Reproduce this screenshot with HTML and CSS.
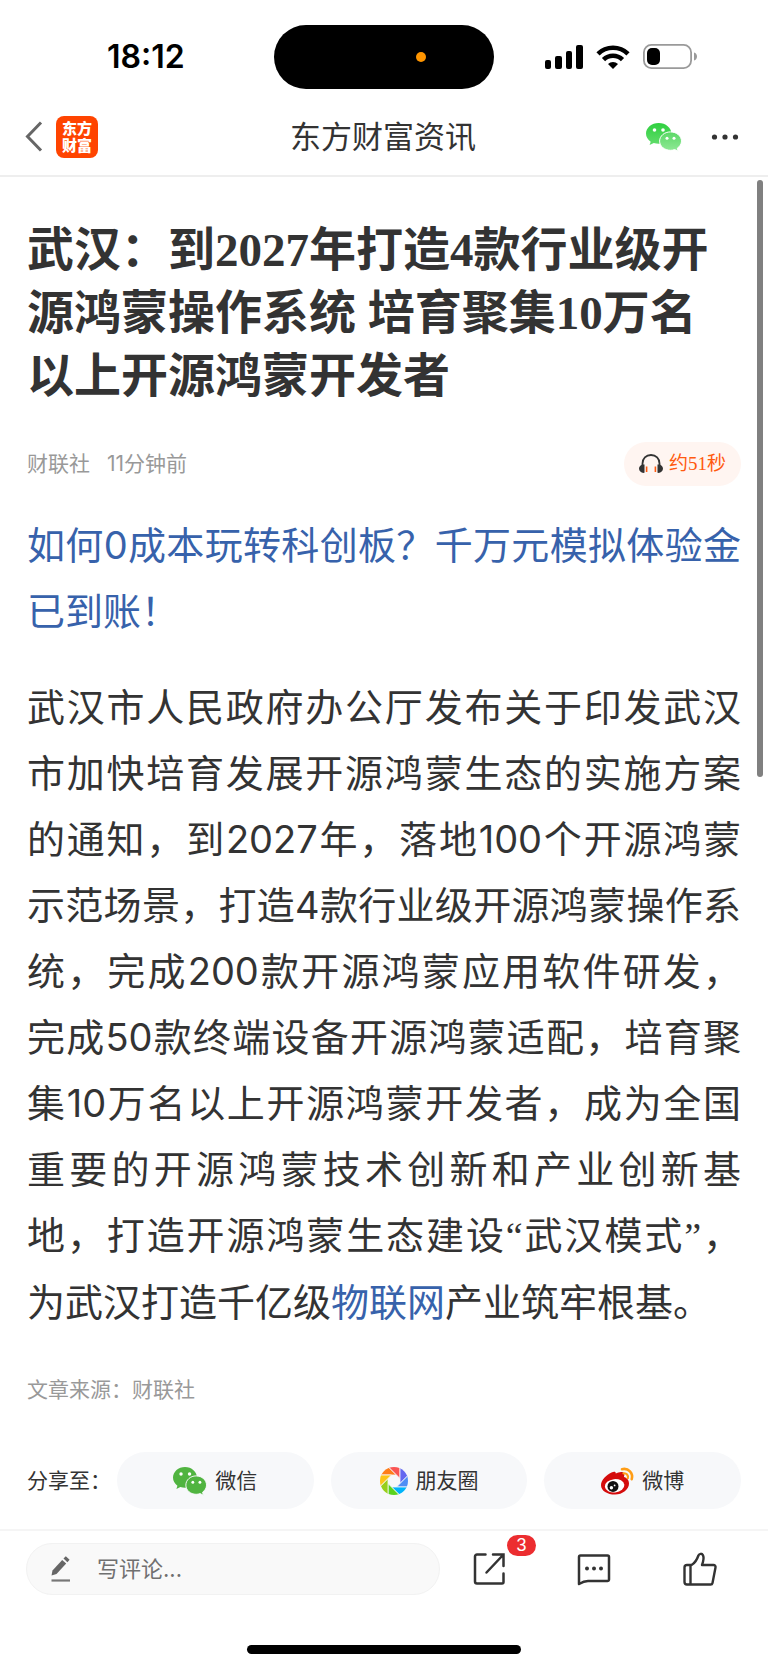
FILE: index.html
```html
<!DOCTYPE html>
<html lang="zh-CN">
<head>
<meta charset="utf-8">
<meta name="viewport" content="width=device-width, initial-scale=1">
<title>东方财富资讯</title>
<link rel="stylesheet" href="styles.css">
</head>
<body>
<div class="screen">
  <div class="status">
    <time class="clock">18:12</time>
    <div class="island"><span class="island-dot"></span></div>
    <div class="status-icons">
      <svg width="38" height="24" viewBox="0 0 38 24" aria-hidden="true"><rect x="0" y="15" width="6" height="9" rx="2"/><rect x="10" y="11" width="7" height="13" rx="2"/><rect x="21" y="6" width="6" height="18" rx="2"/><rect x="31" y="0" width="7" height="24" rx="2"/></svg>
      <svg width="34" height="24" viewBox="0 0 34 24" fill="none" stroke="#000" stroke-width="4.6" aria-hidden="true"><path d="M2 8.800a21.500 21.500 0 0 1 30 0M7.500 14.600a13.600 13.600 0 0 1 19 0"/><path d="M17 24l-5-5a7.200 7.200 0 0 1 10 0z" fill="#000" stroke="none"/></svg>
      <svg width="54" height="25" viewBox="0 0 54 25" aria-hidden="true"><rect x=".9" y=".9" width="47.200" height="23.200" rx="7.500" fill="none" stroke="#9a9a9a" stroke-width="1.800"/><rect x="4" y="4" width="13" height="17" rx="5"/><path d="M51 8.500c4 1 4 7 0 8z" fill="#9a9a9a"/></svg>
    </div>
  </div>

  <header class="nav">
    <div class="nav-side">
      <button class="icon-btn" aria-label="返回"><svg width="15" height="31" viewBox="2 0 15 31" fill="none" stroke="#666" stroke-width="3"><path d="M16 1.500L2.500 15.500l13.500 14"/></svg></button>
      <a class="logo" href="#"><span>东方</span><span>财富</span></a>
    </div>
    <h2 class="nav-title">东方财富资讯</h2>
    <div class="nav-side nav-actions">
      <button class="icon-btn" aria-label="微信分享"><svg width="36" height="28" viewBox="0 0 36 28">
        <defs><linearGradient id="g" x1="0" y1="0" x2="0" y2="1"><stop offset="0" stop-color="#2fd03f"/><stop offset="1" stop-color="#62dc6c"/></linearGradient><linearGradient id="h" x1="0" y1="0" x2="0" y2="1"><stop offset="0" stop-color="#5bd866"/><stop offset="1" stop-color="#90e996"/></linearGradient></defs>
        <path fill="url(#g)" d="M12.700 0C5.700 0 0 4.700 0 10.500c0 3.300 1.800 6.200 4.700 8.200L3.600 22l4.200-2.100c1.500.5 3.200.8 4.900.8 7 0 12.700-4.600 12.700-10.200S19.700 0 12.700 0z"/>
        <path fill="url(#h)" stroke="#fff" stroke-width="1" d="M24.500 8.900c-6.100 0-10.900 4.100-10.900 9.200s4.800 9.200 10.900 9.200c1.500 0 2.900-.2 4.200-.7l3.500 1.600-.9-3c2.600-1.700 4.200-4.200 4.200-7.100 0-5.100-4.900-9.200-11-9.200z"/>
        <g fill="#fff"><circle cx="8.500" cy="7" r="1.800"/><circle cx="17" cy="7" r="1.800"/><circle cx="21" cy="15.200" r="1.500"/><circle cx="28" cy="15.200" r="1.500"/></g></svg></button>
      <button class="icon-btn" aria-label="更多"><svg width="28" height="28" viewBox="0 0 28 28" fill="#333"><circle cx="3.500" cy="14" r="2.600"/><circle cx="14" cy="14" r="2.600"/><circle cx="24.500" cy="14" r="2.600"/></svg></button>
    </div>
  </header>

  <main class="article">
    <h1 class="title">武汉：到2027年打造4款行业级开源鸿蒙操作系统 培育聚集10万名以上开源鸿蒙开发者</h1>
    <div class="meta">
      <span>财联社</span><span>11分钟前</span>
      <button class="listen"><svg width="24" height="20" viewBox="0 0 24 20" fill="none" aria-hidden="true"><path d="M3.500 12V9.500C3.500 4.500 7 1 12 1s8.500 3.500 8.500 8.500V12" stroke="#333" stroke-width="1.800"/><path d="M5.500 10.500v8.300C2.500 19.300 0 17.500 0 14.600s2.500-4.600 5.500-4.100zM18.500 10.500v8.300c3 .5 5.500-1.300 5.500-4.200s-2.500-4.600-5.500-4.100z" fill="#333"/><path d="M7.600 12.500v5.500M16.400 12.500v5.500" stroke="#ff5a0f" stroke-width="1.600"/></svg>约51秒</button>
    </div>
    <p class="text"><a href="#">如何0成本玩转科创板？千万元模拟体验金已到账！</a></p>
    <p class="text">武汉市人民政府办公厅发布关于印发武汉市加快培育发展开源鸿蒙生态的实施方案的通知，到2027年，落地100个开源鸿蒙示范场景，打造4款行业级开源鸿蒙操作系统，完成200款开源鸿蒙应用软件研发，完成50款终端设备开源鸿蒙适配，培育聚集10万名以上开源鸿蒙开发者，成为全国重要的开源鸿蒙技术创新和产业创新基地，打造开源鸿蒙生态建设<span class="quote">“</span>武汉模式<span class="quote">”</span>，为武汉打造千亿级<a href="#">物联网</a>产业筑牢根基。</p>
    <p class="source">文章来源：财联社</p>
    <div class="share">
      <span class="share-label">分享至：</span>
      <button class="pill"><svg width="34" height="28" viewBox="0 0 36 28" preserveAspectRatio="none" aria-hidden="true">
        <g fill="#50b440"><path d="M12.700 0C5.700 0 0 4.700 0 10.500c0 3.300 1.800 6.200 4.700 8.200L3.600 22l4.200-2.100c1.500.5 3.200.8 4.900.8 7 0 12.700-4.600 12.700-10.200S19.700 0 12.700 0z"/>
        <path stroke="#f7f8fa" stroke-width="1" d="M24.500 8.900c-6.100 0-10.900 4.100-10.900 9.200s4.800 9.200 10.900 9.200c1.500 0 2.900-.2 4.200-.7l3.500 1.600-.9-3c2.600-1.700 4.200-4.200 4.200-7.100 0-5.100-4.900-9.200-11-9.200z"/></g>
        <g fill="#fff"><circle cx="8.500" cy="7" r="1.800"/><circle cx="17.500" cy="7" r="1.800"/><circle cx="21" cy="15.200" r="1.500"/><circle cx="28.500" cy="15.200" r="1.500"/></g></svg>微信</button>
      <button class="pill"><svg width="28" height="28" viewBox="-14 -14 28 28" aria-hidden="true">
        <clipPath id="c"><circle r="14"/></clipPath>
        <g clip-path="url(#c)"><g stroke="#f7f8fa" stroke-width=".8">
          <path fill="#ff7d1a" d="M2.500-6H-16V-20h4.500z"/>
          <path fill="#fa5452" d="M2.500-6H-16V-20h4.500z" transform="rotate(45)"/>
          <path fill="#6468f0" d="M2.500-6H-16V-20h4.500z" transform="rotate(90)"/>
          <path fill="#4f8ef5" d="M2.500-6H-16V-20h4.500z" transform="rotate(135)"/>
          <path fill="#00b4fa" d="M2.500-6H-16V-20h4.500z" transform="rotate(180)"/>
          <path fill="#5ad21e" d="M2.500-6H-16V-20h4.500z" transform="rotate(225)"/>
          <path fill="#98cf1c" d="M2.500-6H-16V-20h4.500z" transform="rotate(270)"/>
          <path fill="#fcc419" d="M2.500-6H-16V-20h4.500z" transform="rotate(315)"/></g></g></svg>朋友圈</button>
      <button class="pill"><svg width="33" height="28" viewBox="0 0 33 28" aria-hidden="true">
        <path fill="#d40c0c" d="M10.500 5.600c2.500-1.300 4.400-1.100 4.300 1 2.300-1.300 6.800-2.600 8.200-.4.700 1.200.2 2.600-.1 3.800 2.700.8 5.100 2.700 5.100 6.500 0 6-6.400 11-14 11S0 23.800 0 18.200C0 13.200 5.500 8 10.500 5.600z"/>
        <ellipse cx="13.600" cy="18.800" rx="9.800" ry="6.700" fill="#fff" transform="rotate(-6 13.600 18.800)"/>
        <circle cx="12" cy="19.400" r="5.500" fill="#111"/><circle cx="10.400" cy="20.800" r="1.700" fill="#fff"/><circle cx="13.600" cy="18.400" r=".9" fill="#fff"/>
        <g fill="none" stroke="#ff9d16" stroke-linecap="round"><path stroke-width="2.600" d="M21 2.200c6.500-1.500 11.500 4 9.700 10"/><path stroke-width="2.200" d="M22.500 6.300c3-.4 5.100 2 4.300 4.900"/></g></svg>微博</button>
    </div>
  </main>

  <footer class="bar">
    <label class="comment">
      <svg width="20" height="26" viewBox="0 0 20 26" aria-hidden="true"><path fill="#666" d="M.5 19.500l1-5L11.200 4l4 3.600L5.500 18z"/><path fill="#666" d="M12.500 2.600L14.800.3l3.800 3.500-2.200 2.500z"/><path d="M.5 24.500h18.500" stroke="#777" stroke-width="2.200"/></svg>
      <input type="text" placeholder="写评论..." aria-label="写评论">
    </label>
    <button class="tool" aria-label="分享"><svg width="32" height="32" viewBox="0 0 32 32" fill="none" stroke="#333" stroke-width="2.500" stroke-linecap="round"><path d="M12.500 1.500H4A2 2 0 0 0 2 3.500v25a2 2 0 0 0 2 2h25a1.500 1.500 0 0 0 1.500-1.500V20.500M20 1.500H30.500V13M30.500 1.500L13.500 19.500"/></svg><span class="badge">3</span></button>
    <button class="tool" aria-label="评论"><svg width="34" height="32" viewBox="0 0 34 32" fill="none" stroke="#333" stroke-width="2.500" stroke-linejoin="round"><path d="M3.500 2.500h27a1.500 1.500 0 0 1 1.500 1.500V26.500A1.500 1.500 0 0 1 30.500 28H11c-4 0-6 1.200-9 3V4A1.500 1.500 0 0 1 3.500 2.500z"/><g fill="#333" stroke="none"><circle cx="10" cy="15.500" r="2"/><circle cx="17" cy="15.500" r="2"/><circle cx="24" cy="15.500" r="2"/></g></svg></button>
    <button class="tool" aria-label="点赞"><svg width="34" height="34" viewBox="0 0 34 34" fill="none" stroke="#333" stroke-width="2.400" stroke-linejoin="round"><path d="M8.500 13H4a2.500 2.500 0 0 0-2.500 2.500v14.500A2.500 2.500 0 0 0 4 32.500h23.500a2 2 0 0 0 2-1.600L32.500 15.500a2 2 0 0 0-2-2.500H19c1.500-4 2-7.500 1-9.700-1-2-3.700-2-4.600.2C14.200 7 12 11 8.500 13zM7.500 13.500v19"/></svg></button>
  </footer>
  <div class="home"></div>
  <div class="scrollbar"></div>
</div>
</body>
</html>
```
FILE: styles.css
```css
* { box-sizing: border-box; }
body {
  margin: 0;
  background: #fff;
  color: #333;
  font-family: Inter, "Noto Sans CJK SC", sans-serif;
  line-height: 1.5;
}
button {
  border: 0;
  padding: 0;
  background: none;
  color: inherit;
  font: inherit;
}
a { color: #3762ab; text-decoration: none; }
svg { display: block; flex: none; overflow: visible; }
.screen { position: relative; }

.status {
  display: grid;
  grid-template-columns: 1fr 220px 1fr;
  align-items: center;
  height: 113px;
}
.clock {
  padding-left: 107px;
  color: #000;
  font-size: 32px;
  font-weight: 600;
}
.island {
  display: flex;
  align-items: center;
  height: 64px;
  padding-left: 142px;
  border-radius: 32px;
  background: #000;
}
.island-dot {
  width: 10px;
  height: 10px;
  border-radius: 50%;
  background: #ff9500;
}
.status-icons {
  display: flex;
  align-items: center;
  justify-content: flex-end;
  gap: 13px;
  padding-right: 71px;
}

.nav {
  display: flex;
  align-items: center;
  height: 64px;
  padding: 0 29px 15px 27px;
  border-bottom: 2px solid #eee;
}
.nav-side {
  display: flex;
  flex: 1;
  align-items: center;
  gap: 14px;
}
.nav-actions { justify-content: flex-end; gap: 29px; }
.nav-title {
  margin: 0;
  font-size: 31px;
  font-weight: 400;
  line-height: 40px;
}
.logo {
  display: flex;
  flex-direction: column;
  align-items: center;
  justify-content: center;
  width: 42px;
  height: 42px;
  border-radius: 8px;
  background: #ff4400;
  color: #fff;
  font-size: 15px;
  font-weight: 900;
  line-height: 17px;
}

.article { padding: 42px 27px 20px; }
.title {
  margin: 0;
  font-family: "Liberation Serif", "Noto Sans CJK SC", serif;
  font-size: 47px;
  font-weight: 700;
  line-height: 63px;
}
.meta {
  display: flex;
  align-items: center;
  gap: 17px;
  margin: 34px 0 26px;
  color: #999;
  font-size: 21px;
}
.listen {
  display: flex;
  align-items: center;
  gap: 6px;
  height: 44px;
  margin-left: auto;
  padding: 0 15px;
  border-radius: 22px;
  background: #fff5f1;
  color: #ff5a0f;
  font-family: "Liberation Serif", "Noto Sans CJK SC", serif;
  font-size: 19px;
}
.text {
  margin: 0 0 30px;
  font-size: 38px;
  line-height: 66px;
  text-align: justify;
}
.quote { font-family: "Liberation Serif", serif; }
.source {
  margin: 0 0 46px;
  padding-top: 9px;
  color: #999;
  font-size: 21px;
  line-height: 32px;
}
.share {
  display: flex;
  align-items: center;
  gap: 17px;
  font-size: 21px;
}
.share-label { margin-right: -11px; }
.pill {
  display: flex;
  flex: 1;
  align-items: center;
  justify-content: center;
  gap: 8px;
  height: 57px;
  border-radius: 29px;
  background: #f7f8fa;
}

.bar {
  display: flex;
  align-items: center;
  gap: 72px;
  padding: 12px 51px 12px 26px;
  border-top: 2px solid #f5f5f5;
}
.comment {
  display: flex;
  flex: 1;
  align-items: center;
  gap: 24px;
  min-width: 0;
  height: 52px;
  margin-right: -39px;
  padding: 0 24px;
  border: 1px solid #f2f2f2;
  border-radius: 26px;
  background: #f9f9f9;
}
.comment input {
  flex: 1;
  min-width: 0;
  border: 0;
  outline: 0;
  background: none;
  font: inherit;
  font-size: 22px;
}
.comment input::placeholder { color: #707070; opacity: 1; }
.tool { position: relative; }
.badge {
  position: absolute;
  top: -18px;
  left: 34px;
  width: 29px;
  height: 21px;
  border-radius: 11px;
  background: #ec2d30;
  color: #fff;
  font-family: "Liberation Sans", sans-serif;
  font-size: 18px;
  line-height: 21px;
  text-align: center;
}
.home {
  width: 274px;
  height: 9px;
  margin: 38px auto 14px;
  border-radius: 5px;
  background: #000;
}
.scrollbar {
  position: absolute;
  top: 180px;
  right: 5px;
  width: 6px;
  height: 597px;
  border-radius: 3px;
  background: #808080;
}
```
